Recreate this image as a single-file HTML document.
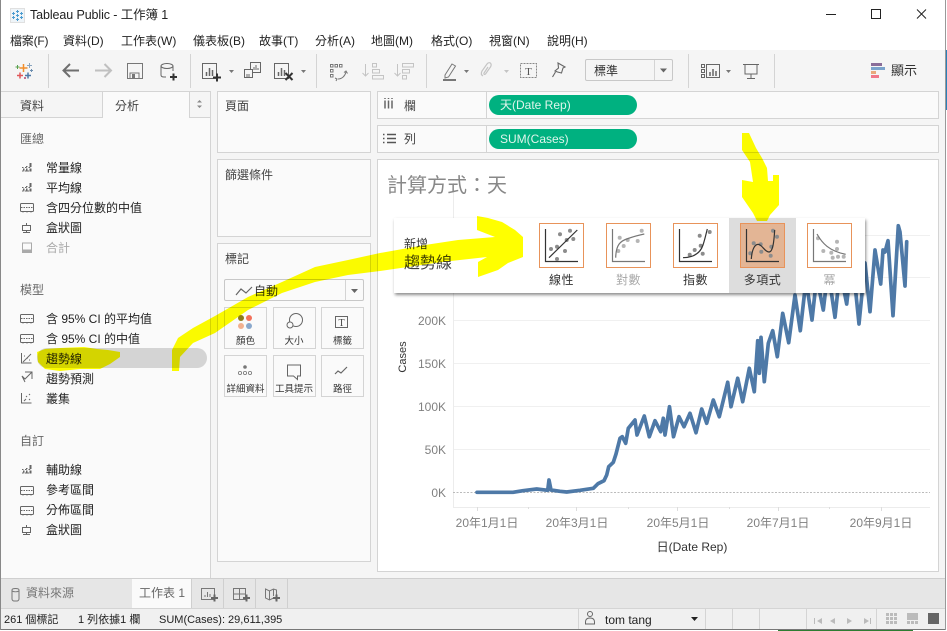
<!DOCTYPE html>
<html><head><meta charset="utf-8"><title>Tableau Public</title>
<style>
html,body{margin:0;padding:0;background:#fff}
body{width:947px;height:631px;overflow:hidden;position:relative;font-family:"Liberation Sans","Noto Sans CJK TC",sans-serif;font-size:12px;color:#333}
.b{position:absolute;box-sizing:border-box}
.t{position:absolute;white-space:nowrap;line-height:16px;height:16px}
.c{transform:translateX(-50%)}
.card{position:absolute;box-sizing:border-box;background:#fafafa;border:1px solid #d4d4d4}
.mb{position:absolute;box-sizing:border-box;background:#fafafa;border:1px solid #d4d4d4;width:43px;height:42px}
.menu{color:#222}
.it{color:#222}
.m{font-size:9.5px;color:#333}
svg{position:absolute;left:0;top:0}
</style></head><body>
<!-- base -->
<div class="b" style="left:0;top:50px;width:945px;height:40px;background:#f5f5f5"></div>
<div class="b" style="left:0;top:90px;width:945px;height:488px;background:#f5f5f5"></div>
<div class="b" style="left:0;top:117px;width:210px;height:461px;background:#fafafa"></div>
<div class="b" style="left:1px;top:91px;width:102px;height:27px;background:#f5f5f5;border:1px solid #d4d4d4;border-left:0"></div>
<div class="b" style="left:103px;top:91px;width:87px;height:27px;background:#fafafa;border-top:1px solid #d4d4d4"></div>
<div class="b" style="left:189px;top:91px;width:22px;height:27px;background:#f5f5f5;border:1px solid #d4d4d4"></div>
<div class="b" style="left:210px;top:91px;width:1px;height:487px;background:#d4d4d4"></div>
<div class="card" style="left:217px;top:91px;width:154px;height:62px"></div>
<div class="card" style="left:217px;top:159px;width:154px;height:78px"></div>
<div class="card" style="left:217px;top:243px;width:154px;height:319px"></div>
<div class="card" style="left:377px;top:91px;width:562px;height:28px"></div>
<div class="card" style="left:377px;top:125px;width:562px;height:28px"></div>
<div class="b" style="left:486px;top:92px;width:1px;height:26px;background:#d4d4d4"></div>
<div class="b" style="left:486px;top:126px;width:1px;height:26px;background:#d4d4d4"></div>
<div class="b" style="left:489px;top:95px;width:148px;height:20px;border-radius:10px;background:#00b180"></div>
<div class="b" style="left:489px;top:129px;width:148px;height:20px;border-radius:10px;background:#00b180"></div>
<div class="b" style="left:377px;top:159px;width:562px;height:413px;background:#fff;border:1px solid #d4d4d4"></div>
<!-- bottom -->
<div class="b" style="left:0;top:578px;width:945px;height:30px;background:#e6e6e6;border-top:1px solid #cfcfcf"></div>
<div class="b" style="left:132px;top:579px;width:59px;height:29px;background:#fafafa"></div>
<div class="b" style="left:0;top:608px;width:945px;height:21px;background:#f0f0f0;border-top:1px solid #d4d4d4"></div>
<div class="b" style="left:0;top:629px;width:946px;height:1px;background:#777"></div>
<div class="b" style="left:778px;top:630px;width:135px;height:1px;background:#2e7d32"></div>
<div class="b" style="left:0;top:0;width:1px;height:630px;background:#888"></div>
<div class="b" style="left:945px;top:0;width:1px;height:630px;background:#999"></div>
<div class="b" style="left:946px;top:50px;width:1px;height:60px;background:#2a7fb8"></div>
<div class="b" style="left:578px;top:609px;width:1px;height:20px;background:#d4d4d4"></div>
<div class="b" style="left:705px;top:609px;width:1px;height:20px;background:#d4d4d4"></div>
<div class="b" style="left:732px;top:609px;width:1px;height:20px;background:#d4d4d4"></div>
<div class="b" style="left:759px;top:609px;width:1px;height:20px;background:#d4d4d4"></div>
<div class="b" style="left:806px;top:609px;width:1px;height:20px;background:#d4d4d4"></div>
<div class="b" style="left:876px;top:609px;width:1px;height:20px;background:#d4d4d4"></div>
<div class="b" style="left:191px;top:579px;width:1px;height:29px;background:#cfcfcf"></div>
<div class="b" style="left:223px;top:579px;width:1px;height:29px;background:#cfcfcf"></div>
<div class="b" style="left:255px;top:579px;width:1px;height:29px;background:#cfcfcf"></div>
<div class="b" style="left:287px;top:579px;width:1px;height:29px;background:#cfcfcf"></div>

<!-- marks -->
<div class="b" style="left:224px;top:279px;width:140px;height:22px;background:#fafafa;border:1px solid #c8c8c8;border-radius:2px"></div>
<div class="b" style="left:345px;top:280px;width:1px;height:20px;background:#d4d4d4"></div>
<div class="mb" style="left:224px;top:307px"></div>
<div class="mb" style="left:273px;top:307px"></div>
<div class="mb" style="left:321px;top:307px"></div>
<div class="mb" style="left:224px;top:355px"></div>
<div class="mb" style="left:273px;top:355px"></div>
<div class="mb" style="left:321px;top:355px"></div>

<!-- chart -->
<svg width="947" height="631" viewBox="0 0 947 631">
<g stroke="#f0f0f0" stroke-width="1">
<path d="M453 235.5H930M453 277.5H930M453 320.5H930M453 363.5H930M453 406.5H930M453 449.5H930"/>
<path d="M453.5 183V507M453 507.5H930" stroke="#ececec"/>
<path d="M477.5 507v4M528.5 507v2M576.5 507v4M628.5 507v2M677.5 507v4M729.5 507v2M778.5 507v4M829.5 507v2M881.5 507v4" stroke="#ddd"/>
</g>
<path d="M453 492.5H930" stroke="#bbb" stroke-width="1" stroke-dasharray="2 1.5"/>
<polyline fill="none" stroke="#4e79a7" stroke-width="3.7" stroke-linejoin="round" stroke-linecap="round" points="477,492.3 513,492.3 523,490.7 536.7,489 547.7,490.3 549,480 551,490 560,491.3 566.7,492 580,490.3 593.3,488.3 598,483.7 604,480.7 606.7,475 608.7,466.7 613.3,462.3 616,454 620,438.3 622.3,436.7 625.7,443.3 628.3,428.3 635,420 637,435 644.3,416 649.3,436.7 655,420.7 660.7,431.7 663.3,418.3 665,435 669.5,406.7 673.5,436.7 679,416.7 684,426.7 690,413.3 696,432.7 701.7,409 706.7,423.3 713.3,400 719.3,416.7 727.7,382.3 731,406.7 737.7,378.3 742.7,401.7 749.3,368.3 754.3,391.7 757.7,340.7 759.3,373.3 761,337.3 764.3,381.7 768.3,343.3 772.7,330.7 777.3,356.7 782.7,313.3 788.7,342.7 795,295 800.3,330.7 806,280 812,320 816.7,277 823.3,310 828,270 835,317.3 840,270 846.7,304 852,255 859,324 865,263 870,311.7 875,250 880.7,284 883,250 885,252 888,240.7 893,315.7 898.3,225.7 900,232 905,286 906.7,241.7"/>
</svg>
<div class="t" style="left:387px;top:174px;height:24px;line-height:24px;font-size:20px;color:#888">計算方式：天</div>
<div class="t" style="right:501px;top:313px;color:#808080">200K</div>
<div class="t" style="right:501px;top:356px;color:#808080">150K</div>
<div class="t" style="right:501px;top:399px;color:#808080">100K</div>
<div class="t" style="right:501px;top:442px;color:#808080">50K</div>
<div class="t" style="right:501px;top:485px;color:#808080">0K</div>
<div class="t c" style="left:487px;top:515px;color:#808080">20年1月1日</div>
<div class="t c" style="left:577px;top:515px;color:#808080">20年3月1日</div>
<div class="t c" style="left:678px;top:515px;color:#808080">20年5月1日</div>
<div class="t c" style="left:778px;top:515px;color:#808080">20年7月1日</div>
<div class="t c" style="left:881px;top:515px;color:#808080">20年9月1日</div>
<div class="t c" style="left:692px;top:539px;color:#333">日(Date Rep)</div>
<div class="t" style="left:403px;top:357px;font-size:11px;color:#333;transform:translate(-50%,-50%) rotate(-90deg)">Cases</div>

<!-- popup -->
<div class="b" style="left:394px;top:218px;width:471px;height:75px;background:#fff;box-shadow:1px 2px 3px rgba(0,0,0,.45)"></div>
<div class="b" style="left:729px;top:218px;width:67px;height:75px;background:#ddd"></div>
<svg width="947" height="631" viewBox="0 0 947 631">
<defs>
<g id="ax"><path d="M6.5 6V38.5H39" fill="none" stroke-width="1.2"/></g>
</defs>
<g transform="translate(539,223)">
<rect x=".5" y=".5" width="44" height="44" fill="#fff" stroke="#e8935a"/>
<use href="#ax" stroke="#333"/>
<g fill="#8c8c8c"><circle cx="21" cy="11.3" r="2"/><circle cx="31" cy="7.7" r="2"/><circle cx="27.7" cy="17" r="2"/><circle cx="34.3" cy="16" r="2"/><circle cx="18" cy="23.7" r="2"/><circle cx="12" cy="26" r="2"/><circle cx="26" cy="28" r="2"/><circle cx="18" cy="36" r="2"/></g>
<path d="M10 34.7L38.3 7" stroke="#333" stroke-width="1.2" fill="none"/>
</g>
<g transform="translate(606,223)">
<rect x=".5" y=".5" width="44" height="44" fill="#fff" stroke="#e8935a"/>
<use href="#ax" stroke="#777"/>
<g fill="#b5b5b5"><circle cx="13.7" cy="14.7" r="2"/><circle cx="35.7" cy="7.7" r="2"/><circle cx="21.7" cy="17" r="2"/><circle cx="31.7" cy="18" r="2"/><circle cx="17.7" cy="23" r="2"/><circle cx="12.3" cy="28" r="2"/></g>
<path d="M9.7 34.7C10 22 14 18 22 15.5C28 13.5 33 12 38.3 11" stroke="#777" stroke-width="1.2" fill="none"/>
</g>
<g transform="translate(673,223)">
<rect x=".5" y=".5" width="44" height="44" fill="#fff" stroke="#e8935a"/>
<use href="#ax" stroke="#333"/>
<g fill="#8c8c8c"><circle cx="26.7" cy="12.7" r="2"/><circle cx="36.7" cy="9" r="2"/><circle cx="27.7" cy="22.7" r="2"/><circle cx="21.7" cy="27" r="2"/><circle cx="16.7" cy="31.7" r="2"/><circle cx="29.7" cy="30.7" r="2"/></g>
<path d="M10 34.7C20 34.5 27 31 30 22C32 16 33 11 34.3 6" stroke="#333" stroke-width="1.2" fill="none"/>
</g>
<g transform="translate(740,223)">
<rect x=".5" y=".5" width="44" height="44" fill="#e3b595" stroke="#e8935a"/>
<use href="#ax" stroke="#333"/>
<g fill="#8c8c8c"><circle cx="13.7" cy="20.3" r="2"/><circle cx="20.7" cy="21.3" r="2"/><circle cx="33" cy="7.7" r="2"/><circle cx="37" cy="13.7" r="2"/><circle cx="31.3" cy="23.7" r="2"/><circle cx="10.3" cy="30.3" r="2"/><circle cx="21.3" cy="28.7" r="2"/><circle cx="30.7" cy="32.7" r="2"/></g>
<path d="M11.3 36C12 26 15 20.5 19 21.5C23 23 25 29 29 29C33 29 34 18 34.7 7" stroke="#333" stroke-width="1.2" fill="none"/>
</g>
<g transform="translate(807,223)">
<rect x=".5" y=".5" width="44" height="44" fill="#fff" stroke="#e8935a"/>
<use href="#ax" stroke="#777"/>
<g fill="#b5b5b5"><circle cx="11" cy="15.3" r="2"/><circle cx="30" cy="18.7" r="2"/><circle cx="16.3" cy="28" r="2"/><circle cx="24.3" cy="29.7" r="2"/><circle cx="30" cy="26" r="2"/><circle cx="25.7" cy="34.7" r="2"/><circle cx="31" cy="33.7" r="2"/><circle cx="36.7" cy="33.7" r="2"/></g>
<path d="M10 11C15 20 22 28 38.7 31.3" stroke="#777" stroke-width="1.2" fill="none"/>
</g>
</svg>
<div class="t" style="left:404px;top:236px;color:#333">新增</div>
<div class="t" style="left:404px;top:254px;height:20px;line-height:20px;font-size:16px;color:#444">趨勢線</div>
<div class="t c" style="left:561.5px;top:272px;letter-spacing:.5px;color:#333">線性</div>
<div class="t c" style="left:628.5px;top:272px;letter-spacing:.5px;color:#aaa">對數</div>
<div class="t c" style="left:695.5px;top:272px;letter-spacing:.5px;color:#333">指數</div>
<div class="t c" style="left:762.5px;top:272px;letter-spacing:.5px;color:#333">多項式</div>
<div class="t c" style="left:829.5px;top:272px;color:#aaa">冪</div>

<!-- titlebar & menu -->
<div class="t" style="left:30px;top:7px;font-size:12.5px;letter-spacing:-.1px;color:#222">Tableau Public - 工作簿 1</div>
<div class="t menu" style="left:10px;top:33px;letter-spacing:-.2px">檔案(F)</div>
<div class="t menu" style="left:63px;top:33px">資料(D)</div>
<div class="t menu" style="left:121px;top:33px">工作表(W)</div>
<div class="t menu" style="left:193px;top:33px">儀表板(B)</div>
<div class="t menu" style="left:259px;top:33px">故事(T)</div>
<div class="t menu" style="left:315px;top:33px">分析(A)</div>
<div class="t menu" style="left:371px;top:33px">地圖(M)</div>
<div class="t menu" style="left:431px;top:33px">格式(O)</div>
<div class="t menu" style="left:489px;top:33px">視窗(N)</div>
<div class="t menu" style="left:547px;top:33px">說明(H)</div>

<!-- toolbar bits -->
<div class="b" style="left:585px;top:59px;width:88px;height:22px;background:#f5f5f5;border:1px solid #c8c8c8;border-radius:2px"></div>
<div class="b" style="left:654px;top:60px;width:1px;height:20px;background:#d4d4d4"></div>
<div class="t" style="left:594px;top:63px;color:#333">標準</div>
<div class="t" style="left:891px;top:63px;font-size:13px;color:#333">顯示</div>

<!-- labels -->
<div class="t" style="left:20px;top:98px;color:#444">資料</div>
<div class="t" style="left:115px;top:98px;color:#444">分析</div>
<div class="t" style="left:225px;top:98px;color:#444">頁面</div>
<div class="t" style="left:225px;top:167px;color:#444">篩選條件</div>
<div class="t" style="left:225px;top:251px;color:#444">標記</div>
<div class="t" style="left:404px;top:98px;color:#444">欄</div>
<div class="t" style="left:404px;top:131px;color:#444">列</div>
<div class="t" style="left:500px;top:97px;color:#dff5ec">天(Date Rep)</div>
<div class="t" style="left:500px;top:131px;color:#dff5ec">SUM(Cases)</div>
<div class="t" style="left:254px;top:283px;color:#333">自動</div>

<div class="t" style="left:20px;top:131px;color:#666">匯總</div>
<div class="t it" style="left:46px;top:160px">常量線</div>
<div class="t it" style="left:46px;top:180px">平均線</div>
<div class="t it" style="left:46px;top:200px">含四分位數的中值</div>
<div class="t it" style="left:46px;top:220px">盒狀圖</div>
<div class="t" style="left:46px;top:240px;color:#aaa">合計</div>
<div class="t" style="left:20px;top:282px;color:#666">模型</div>
<div class="b" style="left:37px;top:348px;width:170px;height:20px;border-radius:10px;background:#d4d4d4"></div>
<div class="t it" style="left:46px;top:311px">含 95% CI 的平均值</div>
<div class="t it" style="left:46px;top:331px">含 95% CI 的中值</div>
<div class="t it" style="left:46px;top:351px">趨勢線</div>
<div class="t it" style="left:46px;top:371px">趨勢預測</div>
<div class="t it" style="left:46px;top:391px">叢集</div>
<div class="t" style="left:20px;top:433px;color:#666">自訂</div>
<div class="t it" style="left:46px;top:462px">輔助線</div>
<div class="t it" style="left:46px;top:482px">參考區間</div>
<div class="t it" style="left:46px;top:502px">分佈區間</div>
<div class="t it" style="left:46px;top:522px">盒狀圖</div>

<!-- marks labels -->
<div class="t c m" style="left:245.5px;top:334px">顏色</div>
<div class="t c m" style="left:294px;top:334px">大小</div>
<div class="t c m" style="left:342.5px;top:334px">標籤</div>
<div class="t c m" style="left:245.5px;top:382px">詳細資料</div>
<div class="t c m" style="left:294px;top:382px">工具提示</div>
<div class="t c m" style="left:342.5px;top:382px">路徑</div>

<!-- bottom text -->
<div class="t" style="left:26px;top:585px;color:#777">資料來源</div>
<div class="t" style="left:139px;top:585px;color:#666">工作表 1</div>
<div class="t" style="left:4px;top:612px;font-size:11px;color:#222">261 個標記</div>
<div class="t" style="left:78px;top:612px;font-size:11px;color:#222">1 列依據1 欄</div>
<div class="t" style="left:159px;top:612px;font-size:11px;color:#222">SUM(Cases): 29,611,395</div>
<div class="t" style="left:605px;top:612px;font-size:12px;color:#222">tom tang</div>

<!-- icons -->
<svg width="947" height="631" viewBox="0 0 947 631" fill="none">
<defs>
<g id="ref" stroke="#666" fill="#666"><path d="M22 167.5h1.5M25 167.5h2M28.5 167.5h2M22 171h9.5" stroke-dasharray="1.7 1" /><rect x="23" y="168.5" width="1.5" height="2" stroke="none"/><rect x="26" y="166" width="1.5" height="1" stroke="none"/><rect x="29.5" y="163" width="2" height="4" stroke="none"/><rect x="29.5" y="168.5" width="2" height="3" stroke="none"/><rect x="26" y="168.5" width="1.5" height="3" stroke="none"/></g>
<g id="band" stroke="#666"><rect x="20.5" y="203.5" width="13" height="8" rx="1"/><path d="M21 207.5h12" stroke-dasharray="1.5 1"/><path d="M23 211v1.5M27 211v1.5M31 211v1.5"/></g>
<g id="box" stroke="#666"><path d="M26.5 223v2M26.5 231v2M23 232.5h7"/><rect x="22.5" y="225.5" width="8" height="5"/></g>
</defs>

<!-- window buttons -->
<path d="M826 14.5h10" stroke="#222"/>
<rect x="871.5" y="9.5" width="9" height="9" stroke="#222"/>
<path d="M917 9.5l9 9M926 9.5l-9 9" stroke="#222"/>
<!-- app icon -->
<rect x="10.5" y="8.5" width="14" height="14" fill="#eef4f8" stroke="#e0e0e0"/>
<g stroke="#4a9bd0" stroke-width="1"><path d="M17.500 10v3M16 11.500h3M17.500 18v3M16 19.500h3M12 13.500h3M13.500 12v3M12 17.500h3M13.500 16v3M20 13.500h3M21.500 12v3M20 17.500h3M21.500 16v3M16 15.500h3M17.500 14v3"/></g>
<!-- tableau logo -->
<path d="M23.500 64v8M19.500 68h8" stroke="#f28e2b" stroke-width="1.500"/>
<path d="M20 72.500v6M17 75.500h6" stroke="#e15759" stroke-width="1.500"/>
<path d="M28 72.500v6M25 75.500h6" stroke="#4e79a7" stroke-width="1.500"/>
<path d="M29.500 63v5M27 65.500h5" stroke="#8aa5bf" stroke-width="1"/>
<path d="M31.500 69v3M30 70.500h3" stroke="#6b8eb0" stroke-width="1"/>
<path d="M17.500 65v4M15.500 67h4" stroke="#59a14f" stroke-width="1"/>
<path d="M25 77v2M24 78h2" stroke="#b3436c" stroke-width="1"/>
<path d="M48.500 54v34M190.500 54v34M316.500 54v34M426.500 54v34M688.500 54v34M774.500 54v34" stroke="#d4d4d4"/>
<!-- back/forward -->
<path d="M79 70.500H64M70 64l-6.500 6.500L70 77" stroke="#6f6f6f" stroke-width="2"/>
<path d="M95 70.500h15M104.500 64l6.500 6.500-6.500 6.500" stroke="#c0c0c0" stroke-width="2"/>
<!-- save -->
<rect x="127.500" y="63.500" width="15" height="15" stroke="#777"/>
<path d="M130 78v-5h9v5" stroke="#777"/><rect x="132" y="74" width="3" height="4" fill="#777"/>
<!-- data -->
<path d="M161 66v9c0 1 1 2 3 2h2M173 66v5" stroke="#666"/><ellipse cx="167" cy="66" rx="6" ry="2.500" stroke="#666"/>
<path d="M170 77h7M173.500 73.500v7" stroke="#333" stroke-width="2"/>
<!-- new sheet -->
<rect x="202.500" y="63.500" width="14" height="15" stroke="#666"/>
<path d="M206.500 76v-4M209.500 76v-8M212.500 76v-6" stroke="#666" stroke-width="1.500"/>
<path d="M213 77.500h8M217 73.500v8" stroke="#333" stroke-width="2"/>
<path d="M229 70h5l-2.500 3z" fill="#777"/>
<!-- dup -->
<rect x="250.500" y="62.500" width="10" height="10" stroke="#666" fill="#f5f5f5"/>
<rect x="244.500" y="69.500" width="8" height="8" stroke="#666" fill="#f5f5f5"/>
<path d="M254 70v-3M256 70v-5M258 70v-2M247 77v-3M249 77v-3" stroke="#666"/>
<!-- clear -->
<rect x="274.500" y="63.500" width="14" height="15" stroke="#666"/>
<path d="M278.500 76v-4M281.500 76v-8M284.500 76v-6" stroke="#666" stroke-width="1.500"/>
<path d="M285.500 73l7 7M292.500 73l-7 7" stroke="#333" stroke-width="2"/>
<path d="M301 70h5l-2.500 3z" fill="#777"/>
<!-- swap -->
<g fill="#fff" stroke="#777"><rect x="330.500" y="64.500" width="2.500" height="2.500"/><rect x="335" y="64.500" width="2.500" height="2.500"/><rect x="339.500" y="64.500" width="2.500" height="2.500"/><rect x="330.500" y="69.500" width="2.500" height="2.500"/><rect x="330.500" y="74.500" width="2.500" height="2.500"/></g>
<path d="M338 79c4 0 7-3 8-7M344 72.500l2-1.500 1.500 2.500M335 78l2 1-1 2" stroke="#777"/>
<!-- sort -->
<path d="M365.500 64v12M362.500 73l3 3 3-3" stroke="#c4c4c4"/>
<rect x="372.500" y="63.500" width="4" height="3.500" stroke="#c4c4c4"/><rect x="372.500" y="69.500" width="7" height="3.500" stroke="#c4c4c4"/><rect x="372.500" y="75.500" width="11" height="3.500" stroke="#c4c4c4"/>
<path d="M397.500 64v12M394.500 73l3 3 3-3" stroke="#c4c4c4"/>
<rect x="402.500" y="63.500" width="11" height="3.500" stroke="#c4c4c4"/><rect x="402.500" y="69.500" width="7" height="3.500" stroke="#c4c4c4"/><rect x="402.500" y="75.500" width="4" height="3.500" stroke="#c4c4c4"/>
<!-- pen -->
<path d="M445 75l7-11 3.500 2-7 11-3.500 1z" stroke="#777"/>
<path d="M443 80h13" stroke="#777" stroke-width="2"/>
<path d="M464 70h5l-2.500 3z" fill="#777"/>
<!-- clip -->
<path d="M483 76c-2-1-2-3-1-5l5-7c1.500-2 3.500-1.500 4 0 .5 1 0 2-.5 3l-5 7c-1 1-2 0-1.500-1l4-6" stroke="#c4c4c4" stroke-width="1.200"/>
<path d="M504 70h5l-2.500 3z" fill="#c4c4c4"/>
<!-- T -->
<rect x="520.500" y="63.500" width="16" height="14" stroke="#888" stroke-dasharray="2 1"/>
<text x="528.500" y="75" text-anchor="middle" font-family="Liberation Serif" font-size="11" fill="#555">T</text>
<!-- pin -->
<path d="M558 63l7 4-2 1-1.500 5-4-1-2.500-1 3.500-3zM555.500 72l-3 5" stroke="#666" stroke-width="1.100"/>
<path d="M660 68.500h7l-3.500 4z" fill="#666"/>
<!-- show-me sheet icons -->
<g stroke="#666"><rect x="701.500" y="64.500" width="3" height="3"/><rect x="701.500" y="69.500" width="3" height="3"/><rect x="701.500" y="74.500" width="3" height="3"/><rect x="706.500" y="64.500" width="13" height="13"/></g>
<path d="M710 76v-4M713 76v-7M716 76v-5" stroke="#666" stroke-width="1.500"/>
<path d="M726 70h5l-2.500 3z" fill="#777"/>
<path d="M743 64.500h16M745 65v9h12v-9M751 74v4M747 78.500h8" stroke="#666"/>
<!-- show me -->
<rect x="871" y="63" width="11" height="3" fill="#8a6d99"/><rect x="871" y="67" width="14" height="3" fill="#7ba3cc"/><rect x="871" y="71" width="5" height="3" fill="#e9a97c"/><rect x="871" y="75" width="8" height="3" fill="#f0788a"/>
<!-- sort button in tabs -->
<path d="M197 102.500l2.500-2.500 2.500 2.500zM197 105.500l2.500 2.500 2.500-2.500z" fill="#888"/>
<!-- shelf icons -->
<path d="M385 100.500v8M388.500 100.500v8M392 100.500v8" stroke="#666" stroke-width="1.500"/>
<path d="M385 98v1M388.500 98v1M392 98v1" stroke="#666" stroke-width="1.500"/>
<path d="M383 134.500h1.500M383 138.500h1.500M383 142.500h1.500M387 134.500h9M387 138.500h9M387 142.500h9" stroke="#555" stroke-width="1.500"/>
<!-- sidebar icons -->
<use href="#ref"/><use href="#ref" y="20"/>
<use href="#band"/><use href="#box"/>
<rect x="22.500" y="243" width="9" height="9.500" stroke="#aaa"/><rect x="22" y="249.500" width="10" height="3.500" fill="#aaa"/>
<use href="#band" y="111"/><use href="#band" y="131"/>
<path d="M21.500 353v10h10" stroke="#666"/><path d="M23 362l8-8" stroke="#666"/><path d="M24 356h1M29 360h1M27 358h1" stroke="#666"/>
<path d="M22 373l0 0M25 372h7v7M32 372l-7 7-3-3 3 6" stroke="#666"/>
<path d="M21.500 393v10h10" stroke="#666"/><path d="M24 401l2-2M26 396l1 1M29 394l1 1M29 399l1 1" stroke="#666"/>
<use href="#ref" y="302"/>
<use href="#band" y="283"/><use href="#band" y="303"/>
<use href="#box" y="302"/>
<!-- marks icons -->
<path d="M236 295l5-6 5 4 6-6" stroke="#666" stroke-width="1.200"/>
<path d="M351 289h7l-3.500 4z" fill="#666"/>
<circle cx="241" cy="318" r="3" fill="#8c7a1a"/><circle cx="249" cy="318" r="3" fill="#f2705a"/><circle cx="241" cy="326" r="3" fill="#f2b08f"/><circle cx="249" cy="326" r="3" fill="#8aa8cc"/>
<circle cx="296" cy="320" r="6.500" stroke="#666"/><circle cx="290" cy="325" r="3" stroke="#666" fill="#fafafa"/>
<rect x="335.500" y="316.500" width="12" height="11" stroke="#666"/>
<text x="341.500" y="326" text-anchor="middle" font-family="Liberation Serif" font-size="10" fill="#444">T</text>
<circle cx="245" cy="367" r="1.800" fill="#777"/><circle cx="240" cy="373" r="1.600" stroke="#777" stroke-width=".8"/><circle cx="245" cy="373" r="1.600" stroke="#777" stroke-width=".8"/><circle cx="250" cy="373" r="1.600" stroke="#777" stroke-width=".8"/>
<path d="M287.500 365h13v11h-3v3.500l-4-3.500h-6z" stroke="#666"/>
<path d="M335 374l3-3 3 2 6-6" stroke="#666" stroke-width="1.200"/>
<!-- tab icons -->
<path d="M12 590v9c0 1 1 2 2 2h3c1 0 2-1 2-2v-9M12 590c0-2 7-2 7 0" stroke="#777"/><path d="M12 591c2 1 5 1 7 0" stroke="#777"/>
<rect x="201.500" y="588.500" width="13" height="11" stroke="#777"/><path d="M205 597v-2M207.500 597v-5M210 597v-3" stroke="#777"/>
<path d="M211 598h7M214.500 594.500v7" stroke="#666" stroke-width="2"/>
<rect x="233.500" y="588.500" width="12" height="11" stroke="#777"/><path d="M233 594h12M239.500 588v11" stroke="#777"/>
<path d="M243 598h7M246.500 594.500v7" stroke="#666" stroke-width="2"/>
<path d="M265.500 589l4 2 4-2 3 1v9l-3-1-4 2-4-2z" stroke="#777"/><path d="M269.500 591v9M273.500 589v7" stroke="#777"/>
<path d="M273 598h7M276.500 594.500v7" stroke="#666" stroke-width="2"/>
<!-- status icons -->
<circle cx="590" cy="614" r="2.500" stroke="#666"/><path d="M585.500 624v-2c0-3 2-4 4.500-4s4.500 1 4.500 4v2z" stroke="#666"/>
<path d="M691 617h7l-3.500 4z" fill="#222"/>
<g fill="#bbb"><path d="M815 618v6h-1v-6zM822 618l-5 3 5 3zM835 618l-5 3 5 3zM847 618l5 3-5 3zM864 618l5 3-5 3zM870 618h1v6h-1z"/></g>
<g fill="#bbb"><rect x="886" y="613" width="3" height="3"/><rect x="890" y="613" width="3" height="3"/><rect x="894" y="613" width="3" height="3"/><rect x="886" y="617" width="3" height="3"/><rect x="890" y="617" width="3" height="3"/><rect x="894" y="617" width="3" height="3"/><rect x="886" y="621" width="3" height="3"/><rect x="890" y="621" width="3" height="3"/><rect x="894" y="621" width="3" height="3"/>
<rect x="907" y="613" width="11" height="7"/><rect x="907" y="621" width="3" height="3"/><rect x="911" y="621" width="3" height="3"/><rect x="915" y="621" width="3" height="3"/></g>
<rect x="928" y="613" width="11" height="11" fill="#666"/>
</svg>

<!-- yellow highlighter -->
<svg width="947" height="631" viewBox="0 0 947 631" style="mix-blend-mode:multiply">
<path fill="#ff0" d="M172 371V350L178 338L193 328L215 316L248 297L282 282L315 267L348 260L380 253L425 245L458 240L495 237L477 230V216L488 218L502 222L515 230L523 237V257L508 263L498 270L478 277V262L487 257L442 262L380 271L348 275L315 282L282 293L248 310L215 333L193 343L180 357L179 371Z"/>
<path fill="#ff0" d="M742 133H749L756 148L762 158L767 168L768 181H773V175H779V205L770 215L767 221H757L753 213L742 197V180L753 182L750 162L742 150Z"/>
<path fill="#ff0" d="M37 352L45 349L60 348L84 347L97 349L108 350L120 352V357L110 364L100 369H80L60 371L45 369L38 362Z"/>
</svg>
</body></html>
